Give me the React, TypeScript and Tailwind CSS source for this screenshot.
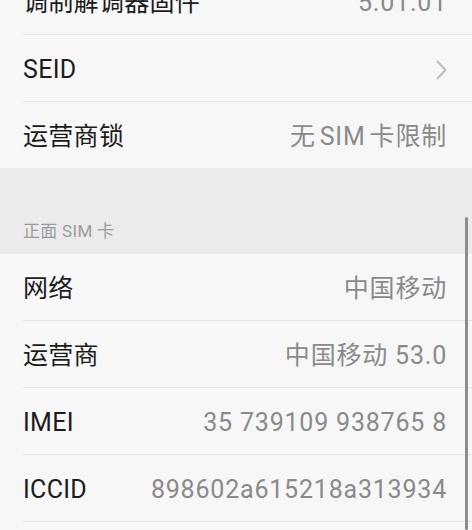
import React from "react";

type Row = { label: string; value?: string; chevron?: boolean; tight?: boolean };

const top: Row[] = [
  { label: "调制解调器固件", value: "5.01.01" },
  { label: "SEID", chevron: true },
  { label: "运营商锁", value: "无 SIM 卡限制", tight: true },
];

const sim: Row[] = [
  { label: "网络", value: "中国移动" },
  { label: "运营商", value: "中国移动 53.0" },
  { label: "IMEI", value: "35 739109 938765 8" },
  { label: "ICCID", value: "898602a615218a313934" },
];

function Item({ row, last }: { row: Row; last?: boolean }) {
  return (
    <div className="bg-[#f7f7f7]">
      <div className="h-[66px] flex items-center justify-between pl-[23px] pr-[25px] pt-[3px]">
        <span className="text-[25px] leading-[30px] text-[#1c1c1c] tracking-[0.3px]">{row.label}</span>
        {row.chevron ? (
          <svg width="13" height="20" viewBox="0 0 13 20" className="mr-[-1px]">
            <path d="M2.5 1.5 L10.5 10 L2.5 18.5" fill="none" stroke="#bdbdbd" strokeWidth="2" strokeLinecap="round" strokeLinejoin="round" />
          </svg>
        ) : row.tight ? (
          <span className="text-[25px] leading-[30px] text-[#8a8a8a] tracking-[0.8px] [word-spacing:-3px]">{row.value}</span>
        ) : (
          <span className="text-[25px] leading-[30px] text-[#8a8a8a] tracking-[0.8px]">{row.value}</span>
        )}
      </div>
      {!last && (
        <div className="pl-[23px]">
          <div className="h-px bg-[#e4e4e4]" />
        </div>
      )}
    </div>
  );
}

export default function App() {
  return (
    <div
      className="relative w-[472px] h-[530px] overflow-hidden bg-[#f7f7f7]"
      style={{ fontFamily: 'Roboto, "Noto Sans CJK SC", sans-serif' }}
    >
      <div className="mt-[-32px]">
        {top.map((r, i) => (
          <Item key={r.label} row={r} last={i === top.length - 1} />
        ))}
        <div className="h-[86px] bg-[#ebebed] flex items-end pl-[23px] pb-[13px]">
          <span className="text-[17px] leading-[20px] text-[#9b9b9b] tracking-[0.3px]">正面 SIM 卡</span>
        </div>
        {sim.map((r) => (
          <Item key={r.label} row={r} />
        ))}
      </div>
      <div className="absolute right-[4px] top-[217px] bottom-0 w-[3px] bg-[#8e8e8e] rounded-full" />
    </div>
  );
}
